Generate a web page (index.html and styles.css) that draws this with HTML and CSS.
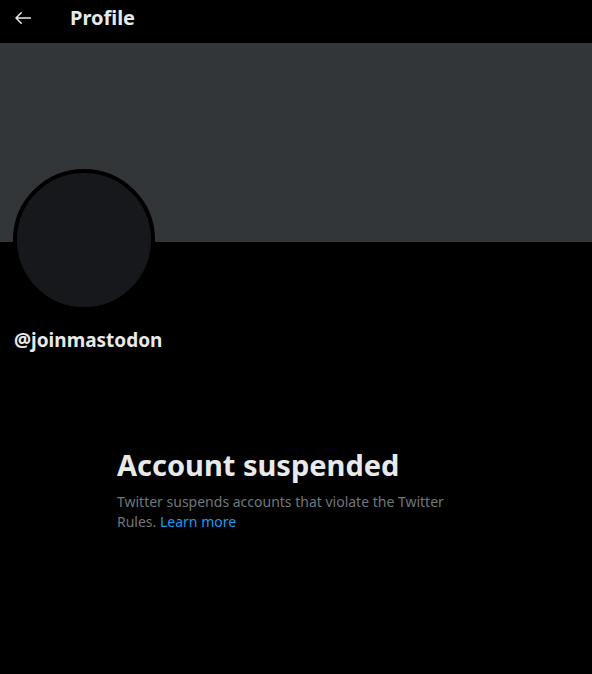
FILE: index.html
```html
<!DOCTYPE html>
<html lang="en">
<head>
<meta charset="utf-8">
<title>Profile</title>
<link rel="stylesheet" href="styles.css">
</head>
<body>
<div class="page">
  <header class="topbar">
    <span class="back">
      <svg width="16" height="12" viewBox="0 0 16 12" aria-hidden="true">
        <path d="M15.5 6H1.2M6.2 0.8L1 6l5.2 5.2" fill="none" stroke="#e7e9ea" stroke-width="1.5" stroke-linecap="round" stroke-linejoin="round"/>
      </svg>
    </span>
    <h1 class="title">Profile</h1>
  </header>
  <div class="banner"></div>
  <div class="avatar"></div>
  <div class="handle">@joinmastodon</div>
  <section class="suspended">
    <h2 class="susp-title">Account suspended</h2>
    <p class="susp-text">Twitter suspends accounts that violate the Twitter Rules. <a class="link" href="#">Learn more</a></p>
  </section>
</div>
</body>
</html>
```
FILE: styles.css
```css
html, body {
  margin: 0;
  padding: 0;
  background: #000;
}
.page {
  width: 592px;
  min-height: 674px;
  background: #000;
  font-family: "Noto Sans", "Open Sans", "Liberation Sans", sans-serif;
  color: #e7e9ea;
}
.topbar {
  height: 43px;
  display: flex;
  align-items: center;
}
.back {
  display: flex;
  width: 16px;
  margin-left: 15px;
  margin-top: -8px;
}
.title {
  margin: -8px 0 0 39px;
  font-size: 20px;
  font-weight: 700;
  line-height: 24px;
}
.banner {
  height: 199px;
  background: #333639;
}
.avatar {
  width: 134px;
  height: 134px;
  margin: -73px 0 0 13px;
  border: 4px solid #000;
  border-radius: 50%;
  background: #16181c;
}
.handle {
  margin: 16px 0 0 14px;
  font-size: 19px;
  font-weight: 700;
  line-height: 26px;
}
.suspended {
  margin: 94px 0 0 117px;
  width: 330px;
}
.susp-title {
  margin: 0;
  font-size: 29px;
  font-weight: 700;
  line-height: 36px;
}
.susp-text {
  margin: 9px 0 0;
  font-size: 14px;
  line-height: 20px;
  color: #71767b;
}
.link {
  color: #1d9bf0;
  text-decoration: none;
}
```
